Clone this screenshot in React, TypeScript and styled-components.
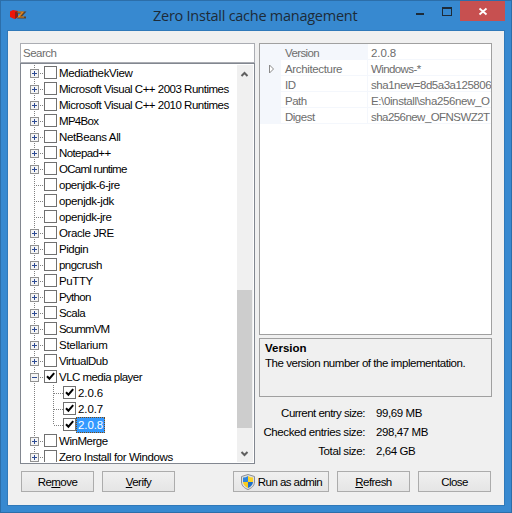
import React from 'react';
import styled, { createGlobalStyle, css } from 'styled-components';

const Global = createGlobalStyle`
  * { box-sizing: border-box; }
  body { margin: 0; background: #3789d0; }
`;

const Window = styled.div`
  width: 512px;
  height: 513px;
  display: flex;
  flex-direction: column;
  overflow: hidden;
  border: 1px solid #2c6ea9;
  background: #3789d0;
  font: 11.5px/16px 'Liberation Sans', Arial, sans-serif;
  letter-spacing: -0.5px;
  color: #000;
  white-space: nowrap;
`;

const TitleBar = styled.header`
  display: flex;
  height: 29px;
  align-items: flex-start;
  padding-left: 8px;
`;

const AppIcon = styled.svg`
  width: 18px;
  height: 12px;
  margin-top: 8px;
`;

const Title = styled.h1`
  flex: 1;
  margin: 0;
  padding: 4px 0 0 126px;
  font: 400 14.5px/22px 'Open Sans', 'Noto Sans', sans-serif;
  letter-spacing: -0.26px;
  color: #1d2b38;
`;

const Caption = styled.svg<{ $w: number }>`
  flex: none;
  width: ${p => p.$w}px;
  height: 20px;
`;

const Client = styled.main`
  width: 498px;
  height: 476px;
  margin-left: 6px;
  padding: 12px 12px 0;
  border: 1px solid #3079b9;
  background: #f0f0f0;
  display: flex;
  flex-direction: column;
`;

const Panes = styled.div`
  display: flex;
  gap: 4px;
  height: 421px;
`;

const LeftPane = styled.section`
  width: 235px;
  display: flex;
  flex-direction: column;
`;

const SearchBox = styled.div`
  height: 20px;
  padding: 1px 2px;
  border: 1px solid #abadb3;
  background: #fff;
  color: #6d6d6d;
`;

const Tree = styled.div`
  height: 401px;
  display: flex;
  border: 1px solid #828790;
  background: #fff;
  padding: 1px 1px 1px 9px;
  overflow: hidden;
`;

const Nodes = styled.ul`
  flex: 1;
  margin: 0;
  padding: 0;
  list-style: none;
  overflow: hidden;
`;

const Node = styled.li`
  display: flex;
  height: 16px;
`;

const Branch = styled.svg<{ $w: number }>`
  flex: none;
  width: ${p => p.$w}px;
  height: 16px;
`;

const Check = styled.svg`
  flex: none;
  width: 13px;
  height: 16px;
`;

const NodeText = styled.span<{ $selected?: boolean; $ls?: number }>`
  height: 16px;
  padding: 0 2px;
  line-height: 17px;
  letter-spacing: ${p => p.$ls ?? -0.5}px;
  ${p => p.$selected && css`
    background: #3399ff;
    color: #fff;
    outline: 1px dotted #7a4a14;
    outline-offset: -1px;
  `}
`;

const ScrollBar = styled.svg`
  flex: none;
  width: 16px;
  height: 397px;
`;

const RightPane = styled.section`
  width: 233px;
  display: flex;
  flex-direction: column;
`;

const Grid = styled.div`
  height: 292px;
  border: 1px solid #a0a0a0;
  background: #fff;
  color: #6d6d6d;
  overflow: hidden;
`;

const Property = styled.div`
  display: grid;
  grid-template-columns: 21px 86px 1fr;
  height: 16px;
  background: #f4f7fc;
`;

const Cell = styled.div<{ $ls?: number; $blank?: boolean }>`
  height: 16px;
  line-height: 18px;
  padding-left: 4px;
  overflow: hidden;
  letter-spacing: ${p => p.$ls ?? -0.5}px;
  background: ${p => (p.$blank ? 'transparent' : '#fff')};
  border-bottom: 1px solid #f4f7fc;
  & + & { border-left: 1px solid #f4f7fc; padding-left: 3px; }
`;

const Expander = styled.svg`
  width: 21px;
  height: 16px;
`;

const Help = styled.div`
  height: 59px;
  margin-top: 3px;
  padding: 2px 5px;
  border: 1px solid #a0a0a0;
  line-height: 15px;
  letter-spacing: -0.45px;
`;

const HelpTitle = styled.strong`
  display: block;
  letter-spacing: 0;
`;

const Sizes = styled.dl`
  display: grid;
  grid-template-columns: 106px 1fr;
  grid-auto-rows: 19px;
  column-gap: 11px;
  margin: 7px 0 0;
  line-height: 19px;
  letter-spacing: -0.4px;
`;

const Label = styled.dt<{ $ls?: number }>`
  text-align: right;
  letter-spacing: ${p => p.$ls ?? -0.4}px;
`;

const Value = styled.dd`
  margin: 0;
`;

const Buttons = styled.footer`
  display: flex;
  gap: 8px;
  margin: 7px 0 0 1px;
`;

const Button = styled.button<{ $w?: number; $push?: boolean }>`
  display: flex;
  align-items: center;
  justify-content: center;
  width: ${p => p.$w ?? 73}px;
  height: 21px;
  padding: 0;
  margin-left: ${p => (p.$push ? 50 : 0)}px;
  border: 1px solid #acacac;
  background: linear-gradient(#f0f0f0, #e5e5e5);
  font: inherit;
  color: #000;
  letter-spacing: -0.55px;
`;

const Key = styled.span`
  text-decoration: underline;
  text-underline-offset: 1px;
`;

const Shield = styled.svg`
  width: 16px;
  height: 16px;
  margin-right: 2px;
`;

type Item = { name: string; kind: 'plus' | 'minus' | 'leaf' | 'child'; checked?: boolean; selected?: boolean; ls?: number };

const items: Item[] = [
  { name: 'MediathekView', kind: 'plus', ls: -0.33 },
  { name: 'Microsoft Visual C++ 2003 Runtimes', kind: 'plus', ls: -0.49 },
  { name: 'Microsoft Visual C++ 2010 Runtimes', kind: 'plus', ls: -0.49 },
  { name: 'MP4Box', kind: 'plus', ls: -0.7 },
  { name: 'NetBeans All', kind: 'plus', ls: -0.36 },
  { name: 'Notepad++', kind: 'plus', ls: -0.6 },
  { name: 'OCaml runtime', kind: 'plus', ls: -0.75 },
  { name: 'openjdk-6-jre', kind: 'leaf', ls: -0.5 },
  { name: 'openjdk-jdk', kind: 'leaf', ls: -0.36 },
  { name: 'openjdk-jre', kind: 'leaf', ls: -0.4 },
  { name: 'Oracle JRE', kind: 'plus', ls: -0.4 },
  { name: 'Pidgin', kind: 'plus', ls: -0.48 },
  { name: 'pngcrush', kind: 'plus', ls: -0.56 },
  { name: 'PuTTY', kind: 'plus', ls: -0.4 },
  { name: 'Python', kind: 'plus', ls: -0.68 },
  { name: 'Scala', kind: 'plus', ls: -0.55 },
  { name: 'ScummVM', kind: 'plus', ls: -0.85 },
  { name: 'Stellarium', kind: 'plus', ls: -0.26 },
  { name: 'VirtualDub', kind: 'plus', ls: -0.48 },
  { name: 'VLC media player', kind: 'minus', checked: true, ls: -0.53 },
  { name: '2.0.6', kind: 'child', checked: true, ls: -0.1 },
  { name: '2.0.7', kind: 'child', checked: true, ls: -0.1 },
  { name: '2.0.8', kind: 'child', checked: true, selected: true, ls: -0.1 },
  { name: 'WinMerge', kind: 'plus', ls: -0.47 },
  { name: 'Zero Install for Windows', kind: 'plus', ls: -0.4 },
];

function Lines({ kind, last }: { kind: Item['kind']; last?: boolean }) {
  const child = kind === 'child';
  const box = kind === 'plus' || kind === 'minus';
  return (
    <Branch $w={child ? 33 : 14} shapeRendering="crispEdges">
      <path d="M4.500 0V16" stroke="#808080" strokeDasharray="1 1" />
      {child && <path d={last ? 'M23.500 0V8' : 'M23.500 0V16'} stroke="#808080" strokeDasharray="1 1" />}
      <path d={child ? 'M24 8.500H33' : 'M6 8.500H14'} stroke="#808080" strokeDasharray="1 1" />
      {box && (
        <>
          <rect x="0.5" y="4.5" width="8" height="8" rx="1" fill="#f5f5f5" stroke="#919191" />
          <path d={kind === 'plus' ? 'M2 8.500H7M4.500 6V11' : 'M2 8.500H7'} stroke="#2c4a93" />
        </>
      )}
    </Branch>
  );
}

function CheckBox({ checked }: { checked?: boolean }) {
  return (
    <Check>
      <rect x="0.5" y="1.5" width="12" height="12" fill="#fff" stroke="#707070" />
      {checked && <path d="M3 7.200L5.400 9.700L10.200 4.200" fill="none" stroke="#000" strokeWidth="2" />}
    </Check>
  );
}

const properties: { name: string; value: string; ls?: number; vls?: number }[] = [
  { name: 'Version', value: '2.0.8', ls: -0.6, vls: -0.1 },
  { name: 'Architecture', value: 'Windows-*', ls: -0.35, vls: -0.6 },
  { name: 'ID', value: 'sha1new=8d5a3a125806', vls: -0.47 },
  { name: 'Path', value: 'E:\\0install\\sha256new_O', vls: -0.38 },
  { name: 'Digest', value: 'sha256new_OFNSWZ2T', vls: -0.55 },
];

export default function App() {
  return (
    <>
      <Global />
      <Window>
        <TitleBar>
          <AppIcon viewBox="0 0 18 12">
            <path d="M1 2.500L4 1L9 2V8L5.500 10L1 8Z" fill="#f01408" />
            <path d="M6 3L9 2V8L6 10Z" fill="#8c2018" />
            <path d="M8 3.500H15L10.500 8.500H17" fill="none" stroke="#59422c" strokeWidth="2.200" />
            <path d="M8.500 3H14L9.500 8H15" fill="none" stroke="#e8861c" strokeWidth="1.200" />
          </AppIcon>
          <Title>Zero Install cache management</Title>
          <Caption $w={25} shapeRendering="crispEdges">
            <rect x="1" y="12" width="8" height="2" fill="#1d2b38" />
          </Caption>
          <Caption $w={20} shapeRendering="crispEdges">
            <path d="M2 6h10v9h-10zM3 8v6h8v-6z" fill="#1d2b38" fillRule="evenodd" />
          </Caption>
          <Caption $w={51}>
            <rect width="45" height="20" fill="#c75050" />
            <path d="M19.500 7.500L26.500 13.500M26.500 7.500L19.500 13.500" stroke="#fff" strokeWidth="1.800" />
          </Caption>
        </TitleBar>
        <Client>
          <Panes>
            <LeftPane>
              <SearchBox>Search</SearchBox>
              <Tree>
                <Nodes>
                  {items.map(i => (
                    <Node key={i.name}>
                      <Lines kind={i.kind} last={i.selected} />
                      <CheckBox checked={i.checked} />
                      <NodeText $selected={i.selected} $ls={i.ls}>{i.name}</NodeText>
                    </Node>
                  ))}
                </Nodes>
                <ScrollBar>
                  <rect width="16" height="397" fill="#f0f0f0" />
                  <rect y="225" width="15" height="138" fill="#cdcdcd" />
                  <path d="M4.500 11L7.500 8L10.500 11" fill="none" stroke="#606060" strokeWidth="2" />
                  <path d="M4.500 387L7.500 390L10.500 387" fill="none" stroke="#606060" strokeWidth="2" />
                </ScrollBar>
              </Tree>
            </LeftPane>
            <RightPane>
              <Grid>
                {properties.map(p => (
                  <Property key={p.name}>
                    <Expander>
                      {p.name === 'Architecture' && <path d="M9.500 5L13.500 9L9.500 13Z" fill="#fff" stroke="#8a8a8a" />}
                    </Expander>
                    <Cell $ls={p.ls} $blank={p.name === 'Version'}>{p.name}</Cell>
                    <Cell $ls={p.vls}>{p.value}</Cell>
                  </Property>
                ))}
              </Grid>
              <Help>
                <HelpTitle>Version</HelpTitle>
                The version number of the implementation.
              </Help>
              <Sizes>
                <Label $ls={-0.53}>Current entry size:</Label><Value>99,69 MB</Value>
                <Label>Checked entries size:</Label><Value>298,47 MB</Value>
                <Label>Total size:</Label><Value>2,64 GB</Value>
              </Sizes>
            </RightPane>
          </Panes>
          <Buttons>
            <Button><span>Re<Key>m</Key>ove</span></Button>
            <Button><span><Key>V</Key>erify</span></Button>
            <Button $w={96} $push>
              <Shield viewBox="0 0 16 16">
                <path d="M8 .5L14.500 2.500V8C14.500 12 11 14.500 8 15.500C5 14.500 1.500 12 1.500 8V2.500Z" fill="#e0e0e0" stroke="#8a8f96" />
                <path d="M8 2V8H3V3.500Q6 3.500 8 2Z" fill="#2f86dc" />
                <path d="M8 2V8H13V3.500Q10 3.500 8 2Z" fill="#fcd425" />
                <path d="M8 8V14Q3.500 12 3 8Z" fill="#f8cc20" />
                <path d="M8 8V14Q12.500 12 13 8Z" fill="#1e6fc8" />
              </Shield>
              Run as admin
            </Button>
            <Button><span><Key>R</Key>efresh</span></Button>
            <Button>Close</Button>
          </Buttons>
        </Client>
      </Window>
    </>
  );
}
